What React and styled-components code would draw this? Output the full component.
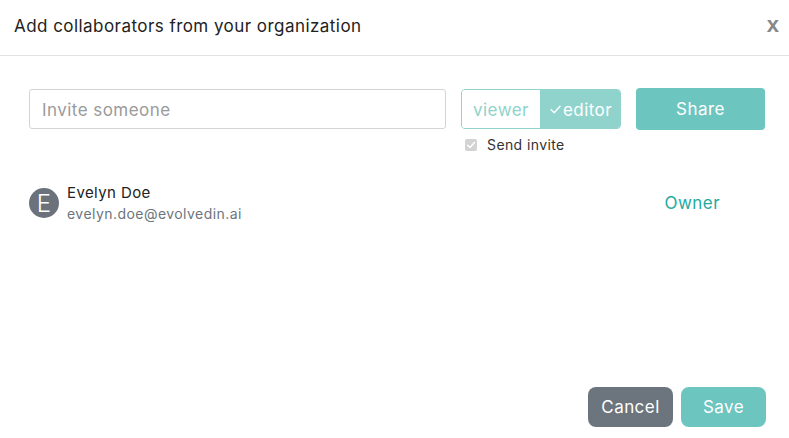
import React from 'react';
import styled, { createGlobalStyle } from 'styled-components';

const GlobalStyle = createGlobalStyle`
	html, body {
		margin: 0;
		padding: 0;
		background: #fff;
	}
	body {
		font-family: 'Inter', 'Liberation Sans', sans-serif;
		color: #212529;
	}
`;

const Modal = styled.div`
	width: 789px;
	height: 438px;
	display: flex;
	flex-direction: column;
	box-sizing: border-box;
	background: #fff;
`;

const Header = styled.header`
	height: 55px;
	flex: 0 0 55px;
	display: flex;
	align-items: center;
	justify-content: space-between;
	padding: 0 10px 0 14px;
	border-bottom: 1px solid #e2e2e2;
`;

const Title = styled.h1`
	margin: 0;
	font-size: 17px;
	letter-spacing: 0.45px;
	font-weight: 400;
	color: #222;
	line-height: 1;
	margin-top: -2px;
`;

const Close = styled.span`
	font-family: 'Liberation Sans', Arial, sans-serif;
	font-weight: bold;
	font-size: 22px;
	color: #888;
	margin-top: -5px;
	cursor: pointer;
`;

const Body = styled.div`
	padding: 32px 24px 0 29px;
	display: flex;
	flex-direction: column;
`;

const InviteRow = styled.div`
	display: flex;
	align-items: flex-start;
	gap: 15px;
`;

const InviteInput = styled.input`
	box-sizing: border-box;
	width: 417px;
	height: 40px;
	margin-top: 1px;
	border: 1px solid #d4d4d4;
	border-radius: 3px;
	padding: 2px 12px 0;
	font-family: 'Inter', 'Liberation Sans', sans-serif;
	font-size: 17px;
	letter-spacing: 0.45px;
	color: #333;
	outline: none;
	&::placeholder {
		color: #9a9a9a;
	}
`;

const RoleColumn = styled.div`
	display: flex;
	flex-direction: column;
	margin-top: 1px;
`;

const Toggle = styled.div`
	display: flex;
	width: 160px;
	height: 40px;
	box-sizing: border-box;
	border: 1px solid #8fd3cc;
	border-radius: 4px;
	overflow: hidden;
`;

const ToggleOption = styled.div`
	flex: 0 0 ${p => (p.$active ? '81px' : '78px')};
	display: flex;
	align-items: center;
	justify-content: center;
	gap: 1px;
	padding-top: 1px;
	font-size: 17px;
	letter-spacing: 0.45px;
	background: ${p => (p.$active ? '#8fd3cc' : '#fff')};
	color: ${p => (p.$active ? '#fff' : '#8fd3cc')};
`;

const CheckRow = styled.label`
	display: flex;
	align-items: center;
	gap: 10px;
	margin-top: 7px;
	padding-left: 4px;
	font-size: 14px;
	letter-spacing: 0.4px;
	color: #333;
`;

const CheckBox = styled.span`
	width: 12px;
	height: 12px;
	border-radius: 2px;
	background: #d3d3d3;
	display: flex;
	align-items: center;
	justify-content: center;
`;

const Button = styled.button`
	box-sizing: border-box;
	height: ${p => p.$height || 40}px;
	width: ${p => p.$width}px;
	border: none;
	border-radius: ${p => p.$radius || 6}px;
	background: ${p => p.$bg};
	color: #fff;
	font-family: 'Inter', 'Liberation Sans', sans-serif;
	font-size: 17px;
	letter-spacing: 0.45px;
	padding-top: 1px;
	cursor: pointer;
`;

const UserRow = styled.div`
	display: flex;
	align-items: center;
	margin-top: 28px;
	height: 44px;
`;

const Avatar = styled.div`
	width: 30px;
	height: 30px;
	border-radius: 50%;
	background: #6c727c;
	color: #fff;
	display: flex;
	align-items: center;
	justify-content: center;
	font-size: 24px;
	font-weight: 300;
	margin-right: 8px;
`;

const UserInfo = styled.div`
	display: flex;
	flex-direction: column;
`;

const UserName = styled.div`
	font-size: 15px;
	letter-spacing: 0.4px;
	line-height: 21px;
	color: #222;
`;

const UserEmail = styled.div`
	font-size: 14px;
	letter-spacing: 0.45px;
	line-height: 21px;
	color: #6c757d;
`;

const Role = styled.div`
	margin-left: auto;
	margin-right: 45px;
	font-size: 17px;
	letter-spacing: 0.45px;
	color: #22a9a0;
`;

const Footer = styled.footer`
	margin-top: auto;
	display: flex;
	justify-content: flex-end;
	gap: 8px;
	padding: 0 23px 11px 0;
`;

const Tick = ({ size = 11, color = '#fff', stroke = 1.6 }) => (
	<svg width={size} height={size} viewBox="0 0 12 12">
		<path d="M2 6.3 L4.8 9 L10.2 3" fill="none" stroke={color} strokeWidth={stroke} strokeLinecap="round" strokeLinejoin="round" />
	</svg>
);

export default function App() {
	return (
		<Modal>
			<GlobalStyle />
			<Header>
				<Title>Add collaborators from your organization</Title>
				<Close>x</Close>
			</Header>
			<Body>
				<InviteRow>
					<InviteInput placeholder="Invite someone" />
					<RoleColumn>
						<Toggle>
							<ToggleOption>viewer</ToggleOption>
							<ToggleOption $active>
								<Tick size={13} stroke={1.3} />
								editor
							</ToggleOption>
						</Toggle>
						<CheckRow>
							<CheckBox>
								<Tick size={10} stroke={1.8} />
							</CheckBox>
							Send invite
						</CheckRow>
					</RoleColumn>
					<Button $width={129} $height={42} $radius={4} $bg="#6cc5bf">Share</Button>
				</InviteRow>
				<UserRow>
					<Avatar>E</Avatar>
					<UserInfo>
						<UserName>Evelyn Doe</UserName>
						<UserEmail>evelyn.doe@evolvedin.ai</UserEmail>
					</UserInfo>
					<Role>Owner</Role>
				</UserRow>
			</Body>
			<Footer>
				<Button $width={85} $bg="#6c757d" $radius={8}>Cancel</Button>
				<Button $width={85} $bg="#6cc5bf" $radius={8}>Save</Button>
			</Footer>
		</Modal>
	);
}
